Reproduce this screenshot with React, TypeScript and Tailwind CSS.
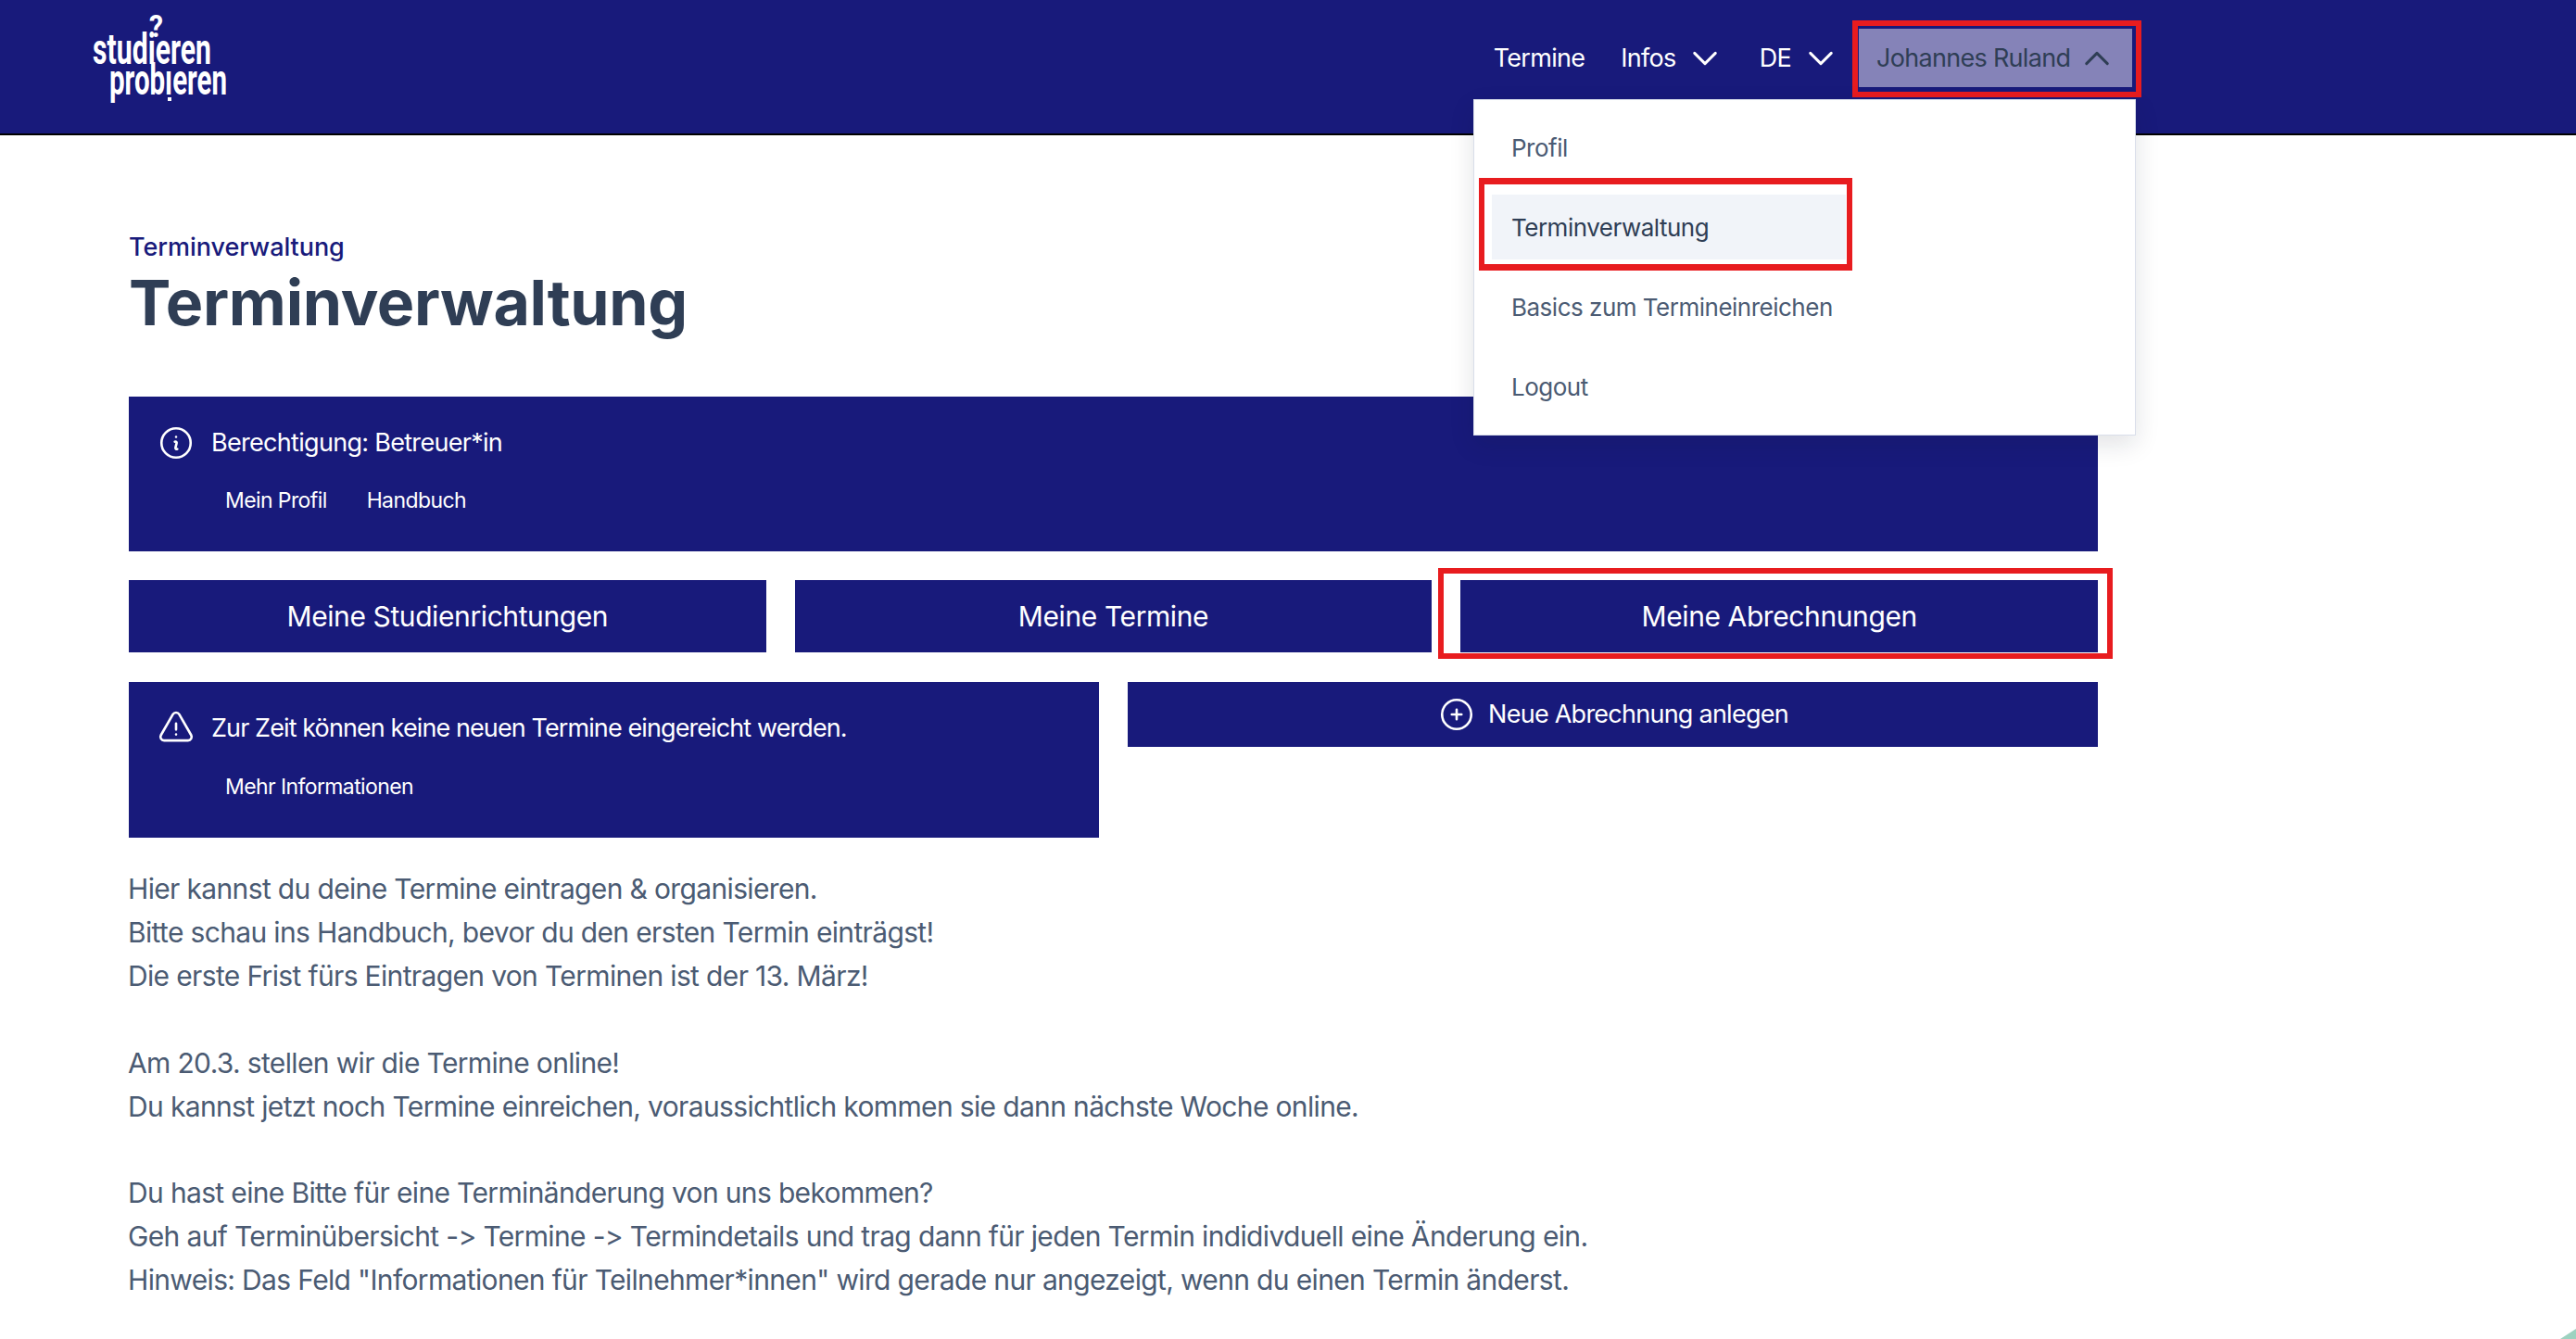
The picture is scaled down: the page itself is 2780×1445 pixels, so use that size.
import {
  HiOutlineChevronDown,
  HiOutlineChevronUp,
  HiOutlineExclamationTriangle,
  HiOutlineInformationCircle,
  HiOutlinePlusCircle,
} from 'react-icons/hi2';

const Logo = () => (
  <svg width="230" height="120" viewBox="0 0 230 120" className="ml-[100px] shrink-0" fill="#ffffff">
    <g fontFamily="Roboto, sans-serif" fontWeight="700">
      <text x="61" y="40" fontSize="34" textLength="15" lengthAdjust="spacingAndGlyphs">?</text>
      <text x="0" y="69" fontSize="46" textLength="128" lengthAdjust="spacingAndGlyphs">studieren</text>
      <text x="18" y="102" fontSize="46" textLength="127" lengthAdjust="spacingAndGlyphs">probıeren</text>
    </g>
    <rect x="81" y="105" width="4" height="4" />
  </svg>
);

const Header = () => (
  <header className="flex h-[146px] justify-between border-b-2 border-black bg-[#181a7b] pr-[479px]">
    <Logo />
    <nav className="mt-[31px] flex h-[63px] items-center text-[27px] tracking-[-0.7px] text-white">
      <a className="pt-[2px]">Termine</a>
      <a className="ml-[39px] pt-[2px]">Infos</a>
      <HiOutlineChevronDown strokeWidth={2} className="ml-[13px] size-[36px]" />
      <a className="ml-[41px] pt-[2px]">DE</a>
      <HiOutlineChevronDown strokeWidth={2} className="ml-[14px] size-[36px]" />
      <div className="relative ml-[23px] flex h-[63px] w-[295px] items-center justify-between bg-[#8583b8] pr-[20px] pl-[19px] text-[#2f3e55]">
        <span className="pt-[2px]">Johannes Ruland</span>
        <HiOutlineChevronUp strokeWidth={2} className="size-[36px]" />
        <div className="pointer-events-none absolute -top-[9px] -right-[10px] -bottom-[11px] -left-[7px] border-[6px] border-[#e81c1f]" />
        <UserMenu />
      </div>
    </nav>
  </header>
);

const UserMenu = () => (
  <div className="absolute top-[76px] -right-[4px] flex w-[715px] flex-col gap-[16px] border border-[#d9deea] bg-white pt-[16px] pb-[17px] pl-[19px] text-[26px] tracking-[-0.5px] text-[#4b5b73] shadow-[0_10px_25px_rgba(15,23,42,0.12)]">
    <a className="flex h-[70px] items-center pl-[21px]">Profil</a>
    <a className="relative flex h-[70px] w-[382px] items-center bg-[#f1f4f9] pl-[21px] text-[#2f3e55]">
      Terminverwaltung
      <div className="pointer-events-none absolute -top-[18px] -right-[7px] -bottom-[12px] -left-[14px] border-x-[6px] border-y-[7px] border-[#e81c1f]" />
    </a>
    <a className="flex h-[70px] items-center pl-[21px]">Basics zum Termineinreichen</a>
    <a className="flex h-[70px] items-center pl-[21px]">Logout</a>
  </div>
);

interface NoticeProps {
  icon: React.ReactNode;
  title: React.ReactNode;
  rowClass: string;
  children: React.ReactNode;
}

const Notice = ({ icon, title, rowClass, children }: NoticeProps) => (
  <div className="bg-[#181a7b] pt-[30px] pb-[41px] pl-[30px] text-white">
    <div className="flex h-[40px] items-center gap-[17px] text-[27px]">
      {icon}
      {title}
    </div>
    <div className={`flex h-[28px] items-center gap-[43px] pl-[74px] text-[23px] tracking-[-0.6px] ${rowClass}`}>{children}</div>
  </div>
);

const TopButton = ({ label, marked }: { label: string; marked?: boolean }) => (
  <a className="relative flex h-[78px] items-center justify-center bg-[#181a7b] text-[30px] tracking-[-0.4px] text-white">
    {label}
    {marked && (
      <div className="pointer-events-none absolute -top-[13px] -right-[16px] -bottom-[7px] -left-[24px] border-[6px] border-[#e81c1f]" />
    )}
  </a>
);

export default function App() {
  return (
    <div className="relative h-[1445px] overflow-hidden bg-white font-[Inter,sans-serif]">
      <Header />
      <main className="pt-[101px] pr-[516px] pl-[139px]">
        <div className="text-[27px] leading-[40px] font-medium tracking-[-0.05px] text-[#181a7b]">Terminverwaltung</div>
        <h1 className="-mt-[1px] text-[68px] leading-[80px] font-bold tracking-[-0.3px] text-[#2f3e55]">Terminverwaltung</h1>

        <div className="mt-[62px]">
          <Notice
            icon={<HiOutlineInformationCircle className="size-[42px]" />}
            title={<span className="tracking-[-0.7px]">Berechtigung: Betreuer*in</span>}
            rowClass="mt-[28px]"
          >
            <a>Mein Profil</a>
            <a>Handbuch</a>
          </Notice>
        </div>

        <div className="mt-[31px] grid grid-cols-3 gap-[31px]">
          <TopButton label="Meine Studienrichtungen" />
          <TopButton label="Meine Termine" />
          <TopButton label="Meine Abrechnungen" marked />
        </div>

        <div className="mt-[32px] grid grid-cols-2 items-start gap-[31px]">
          <Notice
            icon={<HiOutlineExclamationTriangle className="size-[42px]" />}
            title={<span className="tracking-[-0.9px]">Zur Zeit können keine neuen Termine eingereicht werden.</span>}
            rowClass="mt-[29px]"
          >
            <a>Mehr Informationen</a>
          </Notice>
          <a className="flex h-[70px] items-center justify-center gap-[13px] bg-[#181a7b] text-[27px] tracking-[-0.75px] text-white">
            <HiOutlinePlusCircle className="size-[42px]" />
            Neue Abrechnung anlegen
          </a>
        </div>

        <div className="mt-[32px] -ml-[1px] text-[30px] leading-[46.9px] tracking-[-0.65px] text-[#4b5b73]">
          <p>
            Hier kannst du deine Termine eintragen &amp; organisieren.
            <br />
            Bitte schau ins Handbuch, bevor du den ersten Termin einträgst!
            <br />
            Die erste Frist fürs Eintragen von Terminen ist der 13. März!
          </p>
          <p className="mt-[46.9px]">
            Am 20.3. stellen wir die Termine online!
            <br />
            Du kannst jetzt noch Termine einreichen, voraussichtlich kommen sie dann nächste Woche online.
          </p>
          <p className="mt-[46.9px]">
            Du hast eine Bitte für eine Terminänderung von uns bekommen?
            <br />
            Geh auf Terminübersicht -&gt; Termine -&gt; Termindetails und trag dann für jeden Termin indidivduell eine Änderung ein.
            <br />
            Hinweis: Das Feld "Informationen für Teilnehmer*innen" wird gerade nur angezeigt, wenn du einen Termin änderst.
          </p>
        </div>
      </main>
      <svg className="absolute right-0 bottom-0" width="17" height="11" viewBox="0 0 17 11">
        <polygon points="0,11 17,0 17,11" fill="#9dd2c0" />
      </svg>
    </div>
  );
}
